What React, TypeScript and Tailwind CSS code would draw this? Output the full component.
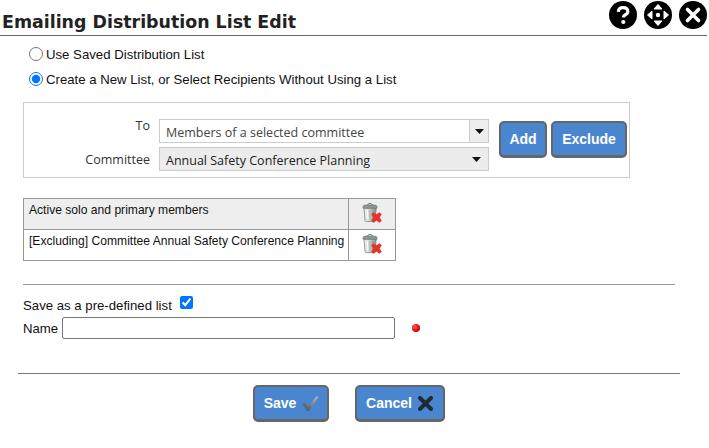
import React from 'react';

const TrashIcon = () => (
  <svg width="20" height="20" viewBox="0 0 20 20" className="block">
    <defs>
      <linearGradient id="can" x1="0" x2="1" y1="0" y2="0">
        <stop offset="0" stopColor="#f4f6f6" />
        <stop offset="0.45" stopColor="#cdd3d3" />
        <stop offset="1" stopColor="#858e8e" />
      </linearGradient>
    </defs>
    <path d="M2 5 L3 17.5 Q3.1 18.6 4.5 18.6 L11 18.6 Q13 18.6 13.2 17.5 L14.2 5 Z" fill="url(#can)" stroke="#7d8585" strokeWidth="0.8" />
    <path d="M1 3.4 Q1 2.3 3.5 2.1 L12.5 2.1 Q15 2.3 15 3.4 L15 5.2 L1 5.2 Z" fill="#8f9797" stroke="#6d7575" strokeWidth="0.7" />
    <path d="M5.5 2 Q5.5 0.6 8 0.6 Q10.5 0.6 10.5 2" fill="none" stroke="#6d7575" strokeWidth="1" />
    <path d="M5.5 7 L5.8 16.5" stroke="#ffffff" strokeWidth="1" />
    <path d="M8 7 L8 16.5" stroke="#a4acac" strokeWidth="1" />
    <path d="M11 7 L10.8 16.5" stroke="#8a9292" strokeWidth="1" />
    <path d="M9.5 11.2 L11.6 9.6 L14.5 11.6 L17.4 9.6 L19.5 11.2 L17.5 14.5 L19.5 17.8 L17.4 19.6 L14.5 17.4 L11.6 19.6 L9.5 17.8 L11.5 14.5 Z" fill="#e8332b" stroke="#d0302a" strokeWidth="0.4" />
  </svg>
);

const HelpIcon = () => (
  <svg width="28" height="28" viewBox="0 0 28 28">
    <circle cx="14" cy="14" r="14" fill="#000" />
    <path d="M9.3 10.8 Q9.5 6.6 14 6.6 Q18.8 6.6 18.8 10.5 Q18.8 12.6 16.4 13.8 Q14.4 14.8 14.4 16.6" fill="none" stroke="#fff" strokeWidth="3.2" />
    <circle cx="14.3" cy="21" r="2.1" fill="#fff" />
  </svg>
);

const MoveIcon = () => (
  <svg width="28" height="28" viewBox="0 0 28 28">
    <circle cx="14" cy="14" r="14" fill="#000" />
    <path d="M14 3.5 L18 8 L10 8 Z M14 24.5 L18 20 L10 20 Z M3.5 14 L8 10 L8 18 Z M24.5 14 L20 10 L20 18 Z" fill="#fff" stroke="#fff" strokeLinejoin="round" />
    <circle cx="14" cy="14" r="2.2" fill="#fff" />
  </svg>
);

const CloseIcon = () => (
  <svg width="28" height="28" viewBox="0 0 28 28">
    <circle cx="14" cy="14" r="14" fill="#000" />
    <path d="M8.5 8.5 L19.5 19.5 M19.5 8.5 L8.5 19.5" stroke="#fff" strokeWidth="3.6" strokeLinecap="round" />
  </svg>
);

const Caret = () => (
  <svg width="9" height="5" viewBox="0 0 9 5" className="block">
    <path d="M0 0 H9 L4.5 5 Z" fill="#111" />
  </svg>
);

const CheckMark = () => (
  <svg width="17" height="17" viewBox="0 0 18 18">
    <defs>
      <linearGradient id="chk" x1="0" x2="1" y1="1" y2="0">
        <stop offset="0" stopColor="#3c4a58" />
        <stop offset="1" stopColor="#b6bcc2" />
      </linearGradient>
    </defs>
    <path d="M0.5 9.5 L3.5 8 L6.5 12 L15.5 1 L17.5 2 L7.5 17 L5.5 17 Z" fill="url(#chk)" />
  </svg>
);

const CrossMark = () => (
  <svg width="15" height="15" viewBox="0 0 15 15">
    <path d="M2 2 L13 13 M13 2 L2 13" stroke="#1f2a36" strokeWidth="4" strokeLinecap="round" />
  </svg>
);

const btn =
  "flex items-center justify-center rounded-[5px] border-2 border-[#666666] border-b-[3px] bg-[#4a86d0] font-['Liberation_Sans',sans-serif] text-[14px] font-bold text-white";

export default function App() {
  return (
    <div className="h-[448px] w-[709px] overflow-hidden bg-white font-['Liberation_Sans',sans-serif] text-[13.2px] text-[#111111]">
      {/* header */}
      <div className="mr-[2px] flex h-[36px] items-start justify-between border-b border-[#666666]">
        <h1 className="mt-[10px] ml-[2px] font-['DejaVu_Sans',sans-serif] text-[17.4px] leading-[24px] font-bold text-[#222222]">
          Emailing Distribution List Edit
        </h1>
        <div className="mt-[1px] flex gap-[7px]">
          <HelpIcon />
          <MoveIcon />
          <CloseIcon />
        </div>
      </div>

      <div className="mt-[8px] ml-[29px] flex h-[20px] items-center gap-[3px]">
        <input type="radio" name="mode" className="m-0 h-[14px] w-[14px]" />
        <span className="pt-[2px]">Use Saved Distribution List</span>
      </div>
      <div className="mt-[5px] ml-[29px] flex h-[20px] items-center gap-[3px]">
        <input type="radio" name="mode" defaultChecked className="m-0 h-[14px] w-[14px]" />
        <span className="pt-[2px]">Create a New List, or Select Recipients Without Using a List</span>
      </div>

      {/* recipient chooser */}
      <div className="mt-[13px] ml-[23px] flex h-[76px] w-[607px] border border-[#cccccc] pt-[16px]">
        <div className="grid grid-cols-[127px_330px] grid-rows-[24px_24px] gap-y-[4px]">
          <div className="mt-[-1px] pr-[1px] text-right font-['Open_Sans',sans-serif] text-[12.5px] leading-[16px] text-[#333333]">To</div>
          <div className="ml-[8px] flex w-[330px] border border-[#cccccc] bg-white font-['Open_Sans',sans-serif] text-[12.5px]">
            <span className="flex-1 px-[6px] pt-[1px] leading-[24px] text-[#444444]">Members of a selected committee</span>
            <span className="flex w-[19px] items-center justify-center border-l border-[#cccccc] bg-[#eeeeee]">
              <Caret />
            </span>
          </div>
          <div className="pt-[1px] pr-[1px] text-right font-['Open_Sans',sans-serif] text-[12.5px] leading-[24px] text-[#333333]">Committee</div>
          <div className="ml-[8px] flex w-[330px] items-center border border-[#cccccc] bg-[#ececec] font-['Open_Sans',sans-serif] text-[12.5px]">
            <span className="flex-1 px-[6px] pt-[3px] leading-[22px] text-[#222222]">Annual Safety Conference Planning</span>
            <span className="mr-[4px] flex w-[15px] items-center justify-center">
              <Caret />
            </span>
          </div>
        </div>
        <div className="mt-[2px] ml-[18px] flex h-[37px] gap-[4px]">
          <button className={`${btn} w-[48px]`}>Add</button>
          <button className={`${btn} w-[76px]`}>Exclude</button>
        </div>
      </div>

      {/* selected criteria */}
      <table className="mt-[20px] ml-[23px] w-[373px] border-collapse text-[12.1px] leading-[14px]">
        <tbody>
          <tr className="h-[31px] bg-[#eeeeee]">
            <td className="border border-[#999999] pt-[4px] pr-[4px] pb-[11px] pl-[5px] align-top">Active solo and primary members</td>
            <td className="w-[47px] border border-[#999999] align-top">
              <div className="flex justify-center pt-[4px]"><TrashIcon /></div>
            </td>
          </tr>
          <tr className="h-[31px]">
            <td className="border border-[#999999] pt-[4px] pr-[4px] pb-[11px] pl-[5px] align-top whitespace-nowrap">
              [Excluding] Committee Annual Safety Conference Planning
            </td>
            <td className="border border-[#999999] align-top">
              <div className="flex justify-center pt-[4px]"><TrashIcon /></div>
            </td>
          </tr>
        </tbody>
      </table>

      <div className="mt-[23px] ml-[23px] w-[652px] border-t border-[#999999]" />

      <div className="mt-[12px] ml-[23px] flex h-[16px] items-center">
        <span className="pt-[2px]">Save as a pre-defined list</span>
        <input type="checkbox" defaultChecked className="mt-[-5px] ml-[8px] h-[13px] w-[13px]" />
      </div>
      <div className="mt-[4px] ml-[23px] flex h-[22px] items-center">
        <span className="w-[39px] pt-[2px]">Name</span>
        <input type="text" className="h-[22px] w-[333px] rounded-[2px] border border-[#767676] bg-white" />
        <span className="ml-[17px] h-[8px] w-[8px] rounded-full bg-[radial-gradient(circle_at_35%_35%,#ff5a5a,#e00000_60%,#a80000)]" />
      </div>

      <div className="mt-[34px] ml-[18px] w-[662px] border-t border-[#777777]" />

      <div className="mt-[11px] flex justify-center gap-[26px] pr-[12px]">
        <button className={`${btn} h-[37px] w-[76px] gap-[6px] pl-[2px]`}>Save <CheckMark /></button>
        <button className={`${btn} h-[37px] w-[90px] gap-[6px]`}>Cancel <CrossMark /></button>
      </div>
    </div>
  );
}
